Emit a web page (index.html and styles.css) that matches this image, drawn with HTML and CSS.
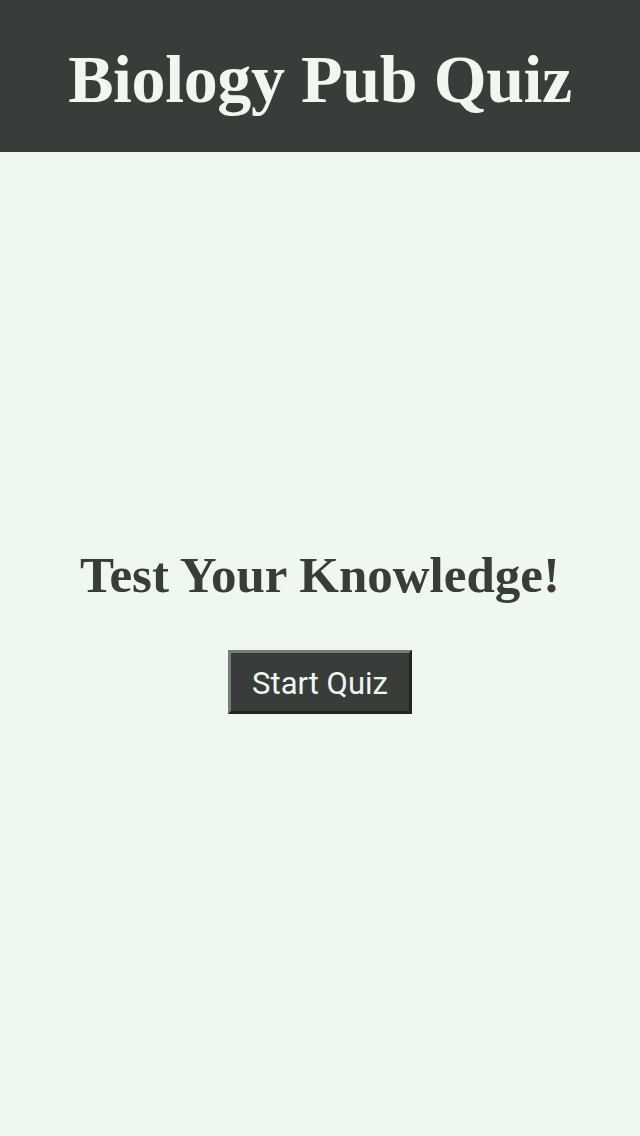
FILE: index.html
```html
<!DOCTYPE html>
<html lang="en">
<head>
<meta charset="utf-8">
<title>Biology Pub Quiz</title>
<link rel="stylesheet" href="styles.css">
</head>
<body>
<header class="site-header">
  <h1 class="site-title">Biology Pub Quiz</h1>
</header>
<main class="intro">
  <h2 class="intro-title">Test Your Knowledge!</h2>
  <button class="start-button" type="button">Start Quiz</button>
</main>
</body>
</html>
```
FILE: styles.css
```css
html, body {
  margin: 0;
  padding: 0;
  height: 100%;
}
body {
  background: #eef8ef;
  display: flex;
  flex-direction: column;
  font-family: "Liberation Serif", "DejaVu Serif", serif;
}
.site-header {
  background: #383d3a;
  height: 152px;
  display: flex;
  align-items: center;
  justify-content: center;
  flex-shrink: 0;
}
.site-title {
  margin: 0;
  color: #eef8ef;
  font-size: 68px;
  font-weight: bold;
  letter-spacing: -0.4px;
  line-height: 1;
  padding-top: 5px;
}
.intro {
  flex: 1;
  display: flex;
  flex-direction: column;
  align-items: center;
  justify-content: center;
  padding-bottom: 25px;
}
.intro-title {
  margin: 0 0 49px;
  color: #383d3a;
  font-size: 51px;
  font-weight: bold;
  line-height: 1;
}
.start-button {
  width: 184px;
  height: 64px;
  background: #383d3a;
  color: #eef8ef;
  font-family: Roboto, "Noto Sans", sans-serif;
  font-size: 31px;
  border: 3px solid;
  border-color: #777a78 #222422 #222422 #777a78;
  padding: 4px 0 0;
  cursor: pointer;
}
```
